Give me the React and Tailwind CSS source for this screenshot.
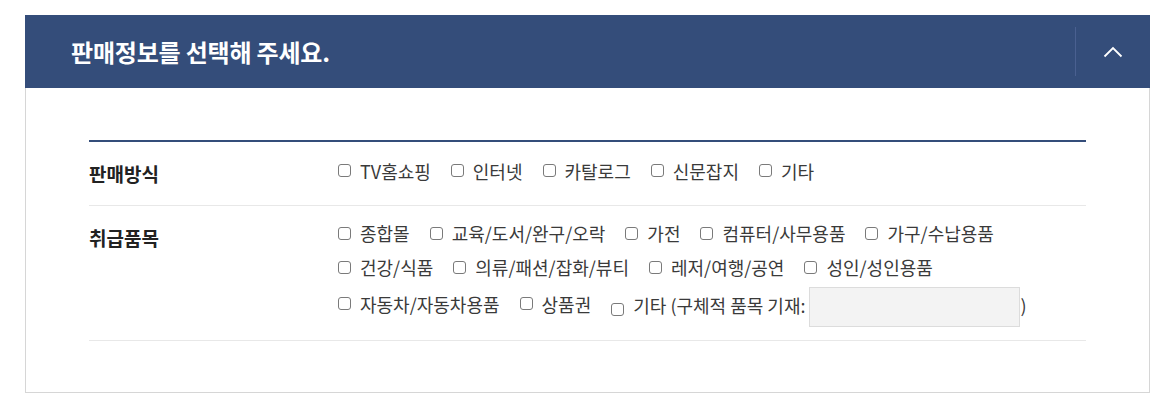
import React from "react";

const font = { fontFamily: '"Noto Sans CJK KR", "Noto Sans", sans-serif' };

function Box({ className = "" }) {
  return (
    <span
      className={
        "inline-block w-[13px] h-[13px] shrink-0 border border-[#7a7a7a] rounded-[3px] bg-white " +
        className
      }
    />
  );
}

function Item({ label, className = "" }) {
  return (
    <label
      className={
        "flex items-center gap-[9px] text-[18px] text-[#3a3a3a] leading-[22px] whitespace-nowrap " +
        className
      }
    >
      <Box />
      <span>{label}</span>
    </label>
  );
}

export default function App() {
  return (
    <div className="bg-white w-[1160px] h-[405px] pt-[15px] pl-[25px]" style={font}>
      <div className="w-[1125px]">
        <div className="h-[73px] bg-[#344d7a] flex items-center">
          <div className="flex-1 pl-[46px] text-white font-bold text-[24px] leading-[30px] tracking-[-0.2px]">
            판매정보를 선택해 주세요.
          </div>
          <div className="h-[49px] w-px bg-[#4a6090]" />
          <div className="w-[74px] h-full flex items-center justify-center">
            <svg width="20" height="12" viewBox="0 0 20 12" fill="none">
              <path d="M1.5 10.5 L10 2 L18.5 10.5" stroke="white" strokeWidth="1.8" />
            </svg>
          </div>
        </div>
        <div className="border-x border-b border-[#d6d6d6] px-[63px] pt-[52px] pb-[51px]">
          <div className="border-t-2 border-[#344d7a]">
            <div className="flex items-center h-[64px] border-b border-[#e8e8e8]">
              <div className="w-[249px] text-[19px] leading-[24px] font-bold text-[#222]">판매방식</div>
              <div className="flex items-center gap-[20px] mb-[6px]">
                <Item label="TV홈쇼핑" />
                <Item label="인터넷" />
                <Item label="카탈로그" />
                <Item label="신문잡지" />
                <Item label="기타" />
              </div>
            </div>
            <div className="flex items-start pt-[10px] pb-[13px] border-b border-[#e8e8e8]">
              <div className="w-[249px] text-[19px] font-bold text-[#222] mt-[10px] leading-[24px]">
                취급품목
              </div>
              <div className="flex flex-col">
                <div className="h-[34px] flex items-center gap-[20px]">
                  <Item label="종합몰" />
                  <Item label="교육/도서/완구/오락" />
                  <Item label="가전" />
                  <Item label="컴퓨터/사무용품" />
                  <Item label="가구/수납용품" />
                </div>
                <div className="h-[34px] flex items-center gap-[20px]">
                  <Item label="건강/식품" />
                  <Item label="의류/패션/잡화/뷰티" />
                  <Item label="레저/여행/공연" />
                  <Item label="성인/성인용품" />
                </div>
                <div className="h-[40px] mt-[3px] flex items-center gap-[20px]">
                  <Item label="자동차/자동차용품" className="mb-[7px]" />
                  <Item label="상품권" className="mb-[7px]" />
                  <label className="flex items-center text-[18px] text-[#3a3a3a] leading-[22px] whitespace-nowrap">
                    <Box className="mt-[4px]" />
                    <span className="ml-[9px] mb-[4px]">기타 (구체적 품목 기재:</span>
                    <input
                      type="text"
                      className="ml-[4px] w-[211px] h-[40px] bg-[#f3f3f3] border border-[#dcdcdc] outline-none"
                    />
                    <span className="mb-[4px]">)</span>
                  </label>
                </div>
              </div>
            </div>
          </div>
        </div>
      </div>
    </div>
  );
}
